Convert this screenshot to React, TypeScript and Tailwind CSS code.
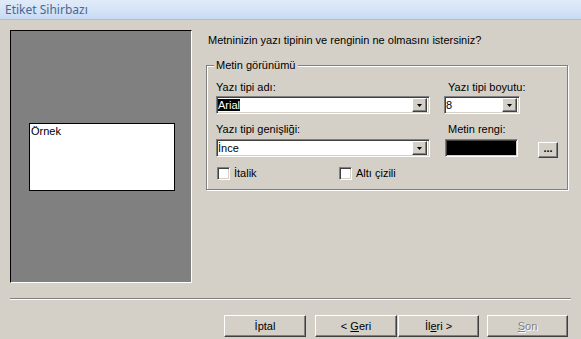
import React from "react";

// classic 3D borders
const raised =
  "border border-t-white border-l-white border-b-[#404040] border-r-[#404040] shadow-[inset_-1px_-1px_0_#808080,inset_1px_1px_0_#d4d0c8]";
const sunken =
  "border border-t-[#808080] border-l-[#808080] border-b-white border-r-white shadow-[inset_1px_1px_0_#404040,inset_-1px_-1px_0_#d4d0c8]";

function DropArrow() {
  return (
    <div className={`flex h-[14px] w-[15px] items-center justify-center bg-[#d4d0c8] ${raised}`}>
      <svg width="5" height="3" viewBox="0 0 5 3">
        <path d="M0 0h5L2.5 3z" fill="#000" />
      </svg>
    </div>
  );
}

function Combo({ className, children }: { className: string; children: React.ReactNode }) {
  return (
    <div className={`flex h-[18px] items-center bg-white pl-[1px] pr-[2px] ${sunken} ${className}`}>
      <div className="flex-1 leading-[13px]">{children}</div>
      <DropArrow />
    </div>
  );
}

function Checkbox({ label }: { label: string }) {
  return (
    <div className="flex items-center">
      <div className={`ml-[1px] h-[13px] w-[13px] bg-white ${sunken}`} />
      <span className="ml-[4px] leading-[13px]">{label}</span>
    </div>
  );
}

function Button({
  children,
  className = "",
  disabled = false,
}: {
  children: React.ReactNode;
  className?: string;
  disabled?: boolean;
}) {
  return (
    <div
      className={`flex h-[22px] items-center justify-center bg-[#d4d0c8] ${raised} ${className} ${
        disabled ? "text-[#808080] [text-shadow:1px_1px_0_#fff]" : ""
      }`}
    >
      {children}
    </div>
  );
}

export default function App() {
  return (
    <div className="flex h-[339px] w-[581px] flex-col overflow-hidden bg-[#d4d0c8] font-['Liberation_Sans',Arial,sans-serif] text-[11px] text-black">
      {/* title bar */}
      <div className="flex h-[20px] items-center border-b border-[#a9c2dc] bg-linear-to-b from-[#e0ebf8] via-[#d6e4f6] to-[#c8dbf4] pl-[5px] font-['Noto_Sans',sans-serif] text-[12px] text-[#4a6896]">
        Etiket Sihirbazı
      </div>

      <div className="flex h-[263px] pl-[10px] pt-[10px]">
        {/* preview */}
        <div className="h-[253px] w-[182px] border border-t-black border-l-black border-b-white border-r-white bg-[#808080] pl-[18px] pt-[92px]">
          <div className="h-[68px] w-[146px] border border-black bg-white pl-[1px] pt-[1px] leading-[13px]">
            Örnek
          </div>
        </div>

        {/* options */}
        <div className="ml-[14px] flex w-[362px] flex-col">
          <div className="mt-[4px] pl-[2px] leading-[13px]">
            Metninizin yazı tipinin ve renginin ne olmasını istersiniz?
          </div>

          <div className="relative mt-[18px] h-[125px] border border-[#808080] shadow-[1px_1px_0_#fff,inset_1px_1px_0_#fff]">
            <span className="absolute -top-[7px] left-[7px] bg-[#d4d0c8] px-[2px] leading-[13px]">
              Metin görünümü
            </span>

            <div className="flex gap-[14px] pl-[9px] pt-[15px]">
              <div className="flex w-[214px] flex-col">
                <div className="leading-[13px]">Yazı tipi adı:</div>
                <Combo className="mt-[2px] w-[214px]">
                  <span className="bg-black text-white">Arial</span>
                </Combo>
                <div className="mt-[9px] leading-[13px]">Yazı tipi genişliği:</div>
                <Combo className="mt-[3px] w-[214px]">İnce</Combo>
                <div className="mt-[10px] flex">
                  <div className="w-[122px]">
                    <Checkbox label="İtalik" />
                  </div>
                  <Checkbox label="Altı çizili" />
                </div>
              </div>

              <div className="flex flex-col">
                <div className="pl-[4px] leading-[13px]">Yazı tipi boyutu:</div>
                <Combo className="mt-[2px] w-[76px]">8</Combo>
                <div className="mt-[9px] pl-[4px] leading-[13px]">Metin rengi:</div>
                <div className="mt-[3px] flex items-start">
                  <div className={`ml-[1px] h-[18px] w-[73px] bg-black ${sunken}`} />
                  <Button className="ml-[20px] mt-[3px] !h-[16px] w-[20px] font-bold leading-none">
                    <span className="-mt-[4px]">...</span>
                  </Button>
                </div>
              </div>
            </div>
          </div>
        </div>
      </div>

      {/* separator */}
      <div className="ml-[10px] mt-[15px] h-[2px] w-[561px] border-t border-b border-t-[#808080] border-b-white" />

      {/* buttons */}
      <div className="mt-[15px] flex pl-[224px]">
        <Button className="w-[82px]">İptal</Button>
        <Button className="ml-[9px] w-[82px]">
          &lt;&nbsp;<span className="underline">G</span>eri
        </Button>
        <Button className="ml-[1px] w-[81px]">
          İl<span className="underline">e</span>ri&nbsp;&gt;
        </Button>
        <Button className="ml-[8px] w-[81px]" disabled>
          <span className="underline">S</span>on
        </Button>
      </div>
    </div>
  );
}
